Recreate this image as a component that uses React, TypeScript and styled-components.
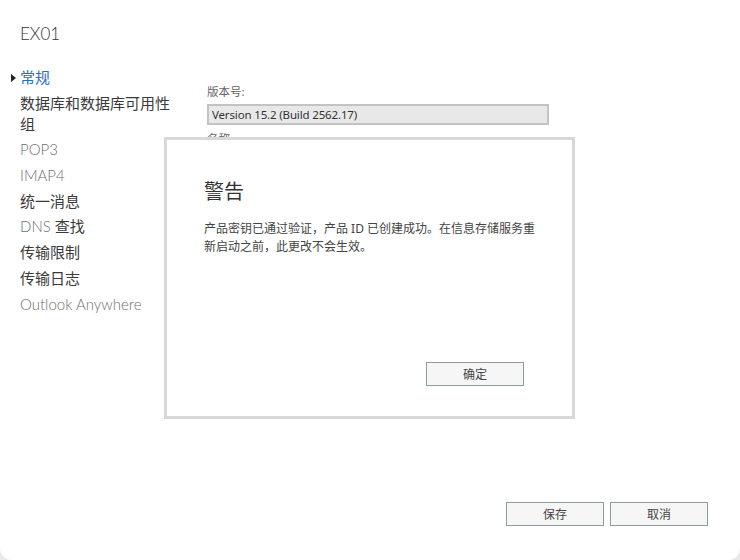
import * as React from 'react';
import styled, { createGlobalStyle } from 'styled-components';

const GlobalStyle = createGlobalStyle`
  html, body {
    margin: 0;
    padding: 0;
    background: #e9e9e9;
  }
  body {
    font-family: "Noto Sans", "Noto Sans CJK SC", sans-serif;
    color: #333;
  }
`;

const Window = styled.div`
  position: relative;
  width: 740px;
  height: 560px;
  background: #fff;
  border-radius: 0 0 12px 12px;
  display: flex;
  flex-direction: column;
  overflow: hidden;
`;

const Header = styled.div`
  height: 66px;
  box-sizing: border-box;
  padding: 22px 0 0 20px;
  font-family: Lato, "Noto Sans", sans-serif;
  font-size: 17px;
  line-height: 24px;
  font-weight: 300;
  color: #333;
`;

const Body = styled.div`
  flex: 1;
  display: flex;
  gap: 32px;
  padding-left: 20px;
`;

const Nav = styled.ul`
  list-style: none;
  margin: 1px 0 0;
  padding: 0;
  width: 155px;
  display: flex;
  flex-direction: column;
  gap: 4.7px;
`;

const NavItem = styled.li<{ $active?: boolean }>`
  position: relative;
  font-size: 15px;
  line-height: 21px;
  color: ${(p) => (p.$active ? '#2670c2' : '#3a3a3a')};

  ${(p) =>
    p.$active &&
    `
    &::before {
      content: '';
      position: absolute;
      left: -9px;
      top: 7px;
      border-left: 5px solid #222;
      border-top: 4px solid transparent;
      border-bottom: 4px solid transparent;
    }
  `}
`;

const Latin = styled.span`
  font-family: Lato, "Noto Sans", sans-serif;
  font-weight: 300;
  color: #6f6f6f;
`;

const Content = styled.div`
  padding-top: 18px;
  display: flex;
  flex-direction: column;
`;

const Label = styled.div`
  font-size: 11.5px;
  line-height: 16px;
  color: #666;
`;

const Field = styled.div`
  width: 342px;
  height: 21px;
  box-sizing: border-box;
  margin: 4px 0 6px;
  padding: 0 3px;
  border: 2px solid #c3c3c3;
  background: #e8e8e8;
  font-size: 11.5px;
  letter-spacing: -0.15px;
  line-height: 17px;
  color: #333;
`;

const Footer = styled.div`
  display: flex;
  justify-content: flex-end;
  gap: 6px;
  padding: 0 32px 34px 0;
`;

const Button = styled.button`
  width: 98px;
  height: 24px;
  box-sizing: border-box;
  border: 1px solid #8e9b9b;
  background: #f6f6f6;
  font-family: inherit;
  font-size: 12px;
  color: #444;
  padding: 0;
  cursor: pointer;
`;

const Dialog = styled.div`
  position: absolute;
  left: 164px;
  top: 137px;
  width: 411px;
  height: 282px;
  box-sizing: border-box;
  border: 3px solid #d8d8d8;
  background: #fff;
  padding: 38px 33px 30px 37px;
  display: flex;
  flex-direction: column;
`;

const DialogTitle = styled.div`
  font-size: 20px;
  line-height: 28px;
  color: #333;
`;

const Message = styled.p`
  margin: 14px 0 0;
  font-size: 12px;
  line-height: 18px;
  color: #444;
`;

const DialogActions = styled.div`
  margin-top: auto;
  display: flex;
  justify-content: flex-end;
  padding-right: 15px;
`;

export default function App() {
  return (
    <>
      <GlobalStyle />
      <Window>
        <Header>EX01</Header>
        <Body>
          <Nav>
            <NavItem $active>常规</NavItem>
            <NavItem>数据库和数据库可用性组</NavItem>
            <NavItem><Latin>POP3</Latin></NavItem>
            <NavItem><Latin>IMAP4</Latin></NavItem>
            <NavItem>统一消息</NavItem>
            <NavItem><Latin>DNS</Latin> 查找</NavItem>
            <NavItem>传输限制</NavItem>
            <NavItem>传输日志</NavItem>
            <NavItem><Latin>Outlook Anywhere</Latin></NavItem>
          </Nav>
          <Content>
            <Label>版本号:</Label>
            <Field>Version 15.2 (Build 2562.17)</Field>
            <Label>名称:</Label>
          </Content>
        </Body>
        <Footer>
          <Button>保存</Button>
          <Button>取消</Button>
        </Footer>
        <Dialog>
          <DialogTitle>警告</DialogTitle>
          <Message>
            产品密钥已通过验证，产品 ID 已创建成功。在信息存储服务重新启动之前，此更改不会生效。
          </Message>
          <DialogActions>
            <Button>确定</Button>
          </DialogActions>
        </Dialog>
      </Window>
    </>
  );
}
